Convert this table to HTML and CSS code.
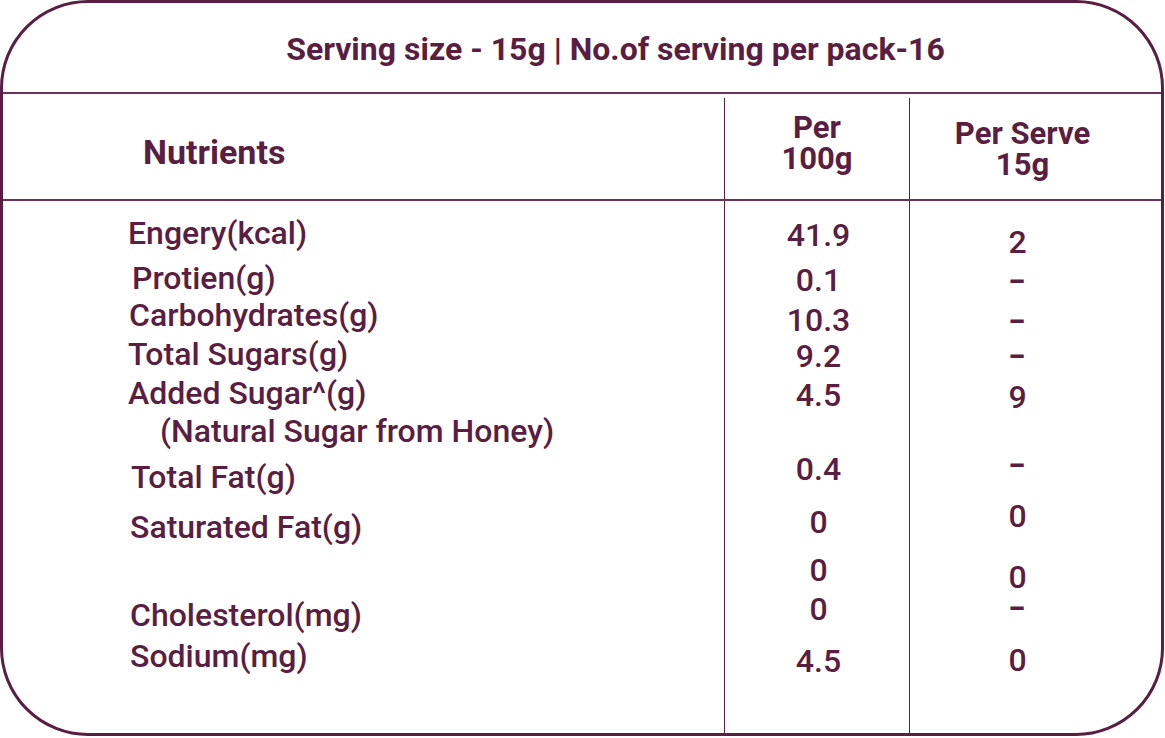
FILE: index.html
```html
<!DOCTYPE html>
<html lang="en">
<head>
<meta charset="utf-8">
<title>Nutrition Information</title>
<link rel="stylesheet" href="styles.css">
</head>
<body>
<div class="card">
  <div class="title">Serving size - 15g | No.of serving per pack-16</div>

  <div class="row head">
    <div class="cell c1"><div class="nut">Nutrients</div></div>
    <div class="cell c2"><div class="ph ph1"><div>Per</div><div>100g</div></div></div>
    <div class="cell c3"><div class="ph ph2"><div>Per Serve</div><div>15g</div></div></div>
  </div>

  <div class="row r1">
    <div class="cell c1"><div class="lab">Engery(kcal)</div></div>
    <div class="cell c2"><div class="val o2">41.9</div></div>
    <div class="cell c3"><div class="val o9">2</div></div>
  </div>
  <div class="row r2">
    <div class="cell c1"><div class="lab in4">Protien(g)</div></div>
    <div class="cell c2"><div class="val o2">0.1</div></div>
    <div class="cell c3"><div class="val o2"><span class="dash">-</span></div></div>
  </div>
  <div class="row r3">
    <div class="cell c1"><div class="lab in1">Carbohydrates(g)</div></div>
    <div class="cell c2"><div class="val o5">10.3</div></div>
    <div class="cell c3"><div class="val o5"><span class="dash">-</span></div></div>
  </div>
  <div class="row r4">
    <div class="cell c1"><div class="lab">Total Sugars(g)</div></div>
    <div class="cell c2"><div class="val o2">9.2</div></div>
    <div class="cell c3"><div class="val o1"><span class="dash">-</span></div></div>
  </div>
  <div class="row r5">
    <div class="cell c1"><div class="lab">Added Sugar^(g)</div></div>
    <div class="cell c2"><div class="val o2">4.5</div></div>
    <div class="cell c3"><div class="val o4">9</div></div>
  </div>
  <div class="row r6">
    <div class="cell c1"><div class="lab in32">(Natural Sugar from Honey)</div></div>
    <div class="cell c2"></div>
    <div class="cell c3"></div>
  </div>
  <div class="row r7">
    <div class="cell c1"><div class="lab in3">Total Fat(g)</div></div>
    <div class="cell c2"><div class="val m8">0.4</div></div>
    <div class="cell c3"><div class="val m13"><span class="dash">-</span></div></div>
  </div>
  <div class="row r8">
    <div class="cell c1"><div class="lab in2">Saturated Fat(g)</div></div>
    <div class="cell c2"><div class="val m5">0</div></div>
    <div class="cell c3"><div class="val m11">0</div></div>
  </div>
  <div class="row r9">
    <div class="cell c1"></div>
    <div class="cell c2"><div class="val m2">0</div></div>
    <div class="cell c3"><div class="val o5">0</div></div>
  </div>
  <div class="row r10">
    <div class="cell c1"><div class="lab in2">Cholesterol(mg)</div></div>
    <div class="cell c2"><div class="val m6">0</div></div>
    <div class="cell c3"><div class="val m8"><span class="dash">-</span></div></div>
  </div>
  <div class="row r11">
    <div class="cell c1"><div class="lab in2">Sodium(mg)</div></div>
    <div class="cell c2"><div class="val o5">4.5</div></div>
    <div class="cell c3"><div class="val o4">0</div></div>
  </div>
</div>
</body>
</html>
```

FILE: styles.css
```css
* {
  box-sizing: border-box;
}

html, body {
  margin: 0;
  padding: 0;
  background: #ffffff;
}

body {
  font-family: Roboto, "Liberation Sans", sans-serif;
  color: #5a1e42;
}

.card {
  width: 1164px;
  height: 736px;
  border: 3px solid #5a1e42;
  border-radius: 88px;
  overflow: hidden;
  display: flex;
  flex-direction: column;
  background: #ffffff;
}

.title {
  height: 91px;
  flex: none;
  border-bottom: 2px solid #6a3357;
  padding-top: 26px;
  padding-left: 67px;
  text-align: center;
  font-size: 32px;
  line-height: 40px;
  font-weight: 700;
  white-space: nowrap;
}

.row {
  display: grid;
  grid-template-columns: 721px 185px 1fr;
  flex: none;
}

.cell {
  min-width: 0;
}

.c2,
.c3 {
  border-left: 1px solid #5b1f45;
}

.head {
  margin-top: 4px;
  height: 103px;
  border-bottom: 2px solid #6a3357;
}

.nut {
  padding-top: 34px;
  padding-left: 140px;
  font-size: 34px;
  line-height: 40px;
  font-weight: 700;
}

.ph {
  font-size: 31px;
  line-height: 31px;
  font-weight: 700;
  text-align: center;
}

.ph1 {
  padding-top: 14px;
}

.ph2 {
  padding-top: 20px;
  padding-right: 26px;
}

.lab,
.val {
  font-size: 32px;
  line-height: 30px;
  font-weight: 500;
  white-space: nowrap;
}

.lab {
  padding-left: 125px;
}

.in1 { padding-left: 126px; }
.in2 { padding-left: 127px; }
.in3 { padding-left: 128px; }
.in4 { padding-left: 129px; }
.in32 { padding-left: 157px; }

.val {
  text-align: center;
}

.c2 .val {
  padding-left: 3px;
}

.c3 .val {
  padding-right: 36px;
}

.dash {
  display: inline-block;
  font-weight: 700;
  transform: scaleX(1.5);
}

/* vertical nudges of values relative to the row's label line */
.o1 { margin-top: 1px; }
.o2 { margin-top: 2px; }
.o4 { margin-top: 4px; }
.o5 { margin-top: 5px; }
.o9 { margin-top: 9px; }
.m2 { margin-top: -2px; }
.m5 { margin-top: -5px; }
.m6 { margin-top: -6px; }
.m8 { margin-top: -8px; }
.m11 { margin-top: -11px; }
.m13 { margin-top: -13px; }

.r1 { height: 62px; }
.r1 .cell { padding-top: 17px; }
.r2 { height: 37px; }
.r3 { height: 39px; }
.r4 { height: 39px; }
.r5 { height: 38px; }
.r6 { height: 46px; }
.r7 { height: 50px; }
.r8 { height: 45px; }
.r9 { height: 43px; }
.r10 { height: 41px; }
.r11 { flex: 1; }
```
